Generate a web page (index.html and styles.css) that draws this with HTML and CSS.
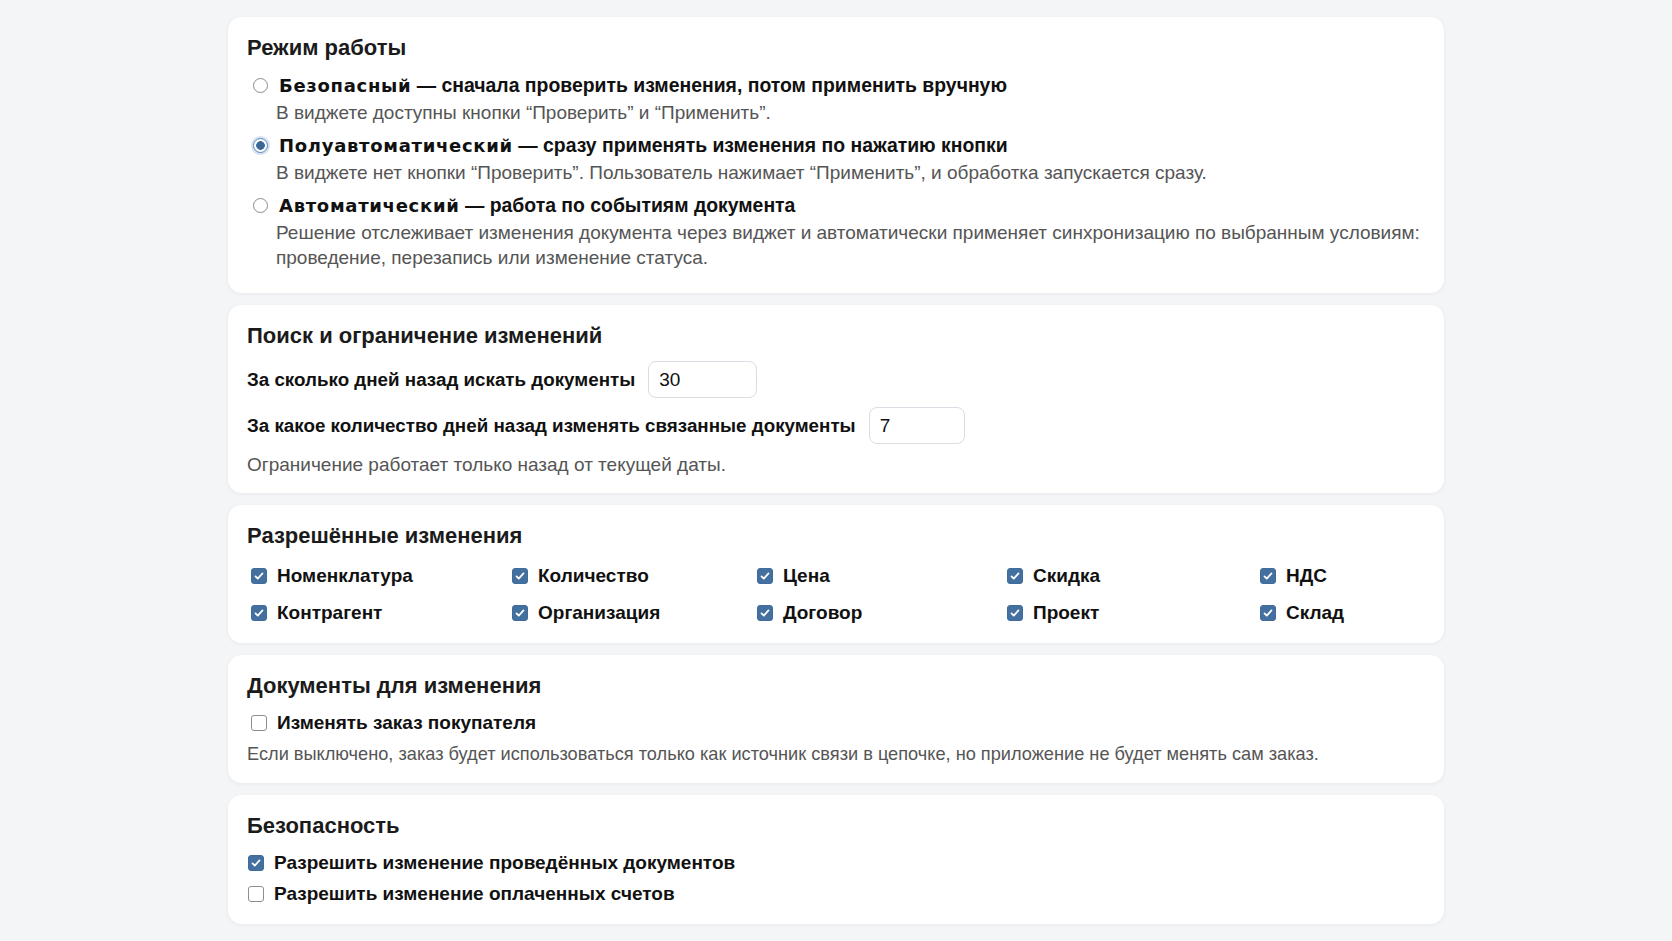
FILE: index.html
```html
<!DOCTYPE html>
<html lang="ru">
  <head>
    <meta charset="UTF-8" />
    <title>Настройки синхронизации</title>
    <link rel="stylesheet" href="styles.css">
  </head>
  <body>
    <div class="page">
      <section class="card card-mode">
        <h2>Режим работы</h2>
        <div class="mode">
          <label class="opt">
            <input type="radio" name="mode" class="radio" />
            <span><b>Безопасный</b> — сначала проверить изменения, потом применить вручную</span>
          </label>
          <p class="desc">В виджете доступны кнопки “Проверить” и “Применить”.</p>
        </div>
        <div class="mode">
          <label class="opt">
            <input type="radio" name="mode" class="radio" checked />
            <span><b>Полуавтоматический</b> — сразу применять изменения по нажатию кнопки</span>
          </label>
          <p class="desc">В виджете нет кнопки “Проверить”. Пользователь нажимает “Применить”, и обработка запускается сразу.</p>
        </div>
        <div class="mode">
          <label class="opt">
            <input type="radio" name="mode" class="radio" />
            <span><b>Автоматический</b> — работа по событиям документа</span>
          </label>
          <p class="desc">Решение отслеживает изменения документа через виджет и автоматически применяет синхронизацию по выбранным условиям: проведение, перезапись или изменение статуса.</p>
        </div>
      </section>

      <section class="card card-search">
        <h2>Поиск и ограничение изменений</h2>
        <div class="field">
          <label for="days-search">За сколько дней назад искать документы</label>
          <input id="days-search" class="num num-wide" type="text" value="30" />
        </div>
        <div class="field">
          <label for="days-linked">За какое количество дней назад изменять связанные документы</label>
          <input id="days-linked" class="num" type="text" value="7" />
        </div>
        <p class="hint">Ограничение работает только назад от текущей даты.</p>
      </section>

      <section class="card">
        <h2>Разрешённые изменения</h2>
        <div class="grid">
          <label class="check"><input type="checkbox" class="box" checked />Номенклатура</label>
          <label class="check"><input type="checkbox" class="box" checked />Количество</label>
          <label class="check"><input type="checkbox" class="box" checked />Цена</label>
          <label class="check"><input type="checkbox" class="box" checked />Скидка</label>
          <label class="check"><input type="checkbox" class="box" checked />НДС</label>
          <label class="check"><input type="checkbox" class="box" checked />Контрагент</label>
          <label class="check"><input type="checkbox" class="box" checked />Организация</label>
          <label class="check"><input type="checkbox" class="box" checked />Договор</label>
          <label class="check"><input type="checkbox" class="box" checked />Проект</label>
          <label class="check"><input type="checkbox" class="box" checked />Склад</label>
        </div>
      </section>

      <section class="card card-docs">
        <h2>Документы для изменения</h2>
        <label class="check"><input type="checkbox" class="box" />Изменять заказ покупателя</label>
        <p class="hint hint-close">Если выключено, заказ будет использоваться только как источник связи в цепочке, но приложение не будет менять сам заказ.</p>
      </section>

      <section class="card">
        <h2>Безопасность</h2>
        <div class="list">
          <label class="check check-tight"><input type="checkbox" class="box" checked />Разрешить изменение проведённых документов</label>
          <label class="check check-tight"><input type="checkbox" class="box" />Разрешить изменение оплаченных счетов</label>
        </div>
      </section>
    </div>
  </body>
</html>
```

FILE: styles.css
```css
body {
  margin: 0;
  padding: 17px 0;
  background: #f4f5f7;
  color: #161616;
  font-family: "Liberation Sans", Arial, sans-serif;
  font-size: 19px;
}
.page {
  width: 1216px;
  margin: 0 auto;
  display: flex;
  flex-direction: column;
  gap: 12px;
}
.card {
  background: #fff;
  border-radius: 14px;
  padding: 17px 19px 18px;
  box-shadow: 0 1px 4px rgba(20, 30, 50, 0.06);
}
.card-mode {
  padding-bottom: 23px;
}
.card-search,
.card-docs {
  padding-bottom: 16px;
}
h2 {
  margin: 0 0 11px;
  font-size: 22px;
  line-height: 28px;
  font-weight: 700;
  color: #1b1b1b;
}
.mode + .mode {
  margin-top: 8px;
}
.opt {
  display: flex;
  align-items: center;
  gap: 11px;
  line-height: 25px;
  font-size: 19.4px;
  font-weight: 700;
  color: #111;
}
.opt b {
  font-family: "DejaVu Sans", sans-serif;
  font-size: 18px;
  font-weight: 700;
  letter-spacing: 0.7px;
}
.desc {
  margin: 2px 0 0 29px;
  line-height: 25px;
  color: #555;
}
.hint {
  margin: 8px 0 0;
  line-height: 25px;
  color: #555;
}
.hint-close {
  margin-top: 7px;
  font-size: 18.2px;
}
.radio {
  appearance: none;
  width: 15px;
  height: 15px;
  margin: 0 0 0 6px;
  border: 1px solid #8a8a8a;
  border-radius: 50%;
  background: #fff;
  flex: none;
}
.radio:checked {
  border: 1px solid #4f82bb;
  background: radial-gradient(circle, #3b6799 0 4px, #fff 4.6px);
  box-shadow: 0 0 0 2px rgba(90, 140, 200, 0.25);
}
.field {
  display: flex;
  align-items: center;
  gap: 13px;
  font-size: 18.8px;
  font-weight: 700;
  color: #111;
}
.field + .field {
  margin-top: 9px;
}
.num {
  width: 96px;
  height: 37px;
  box-sizing: border-box;
  padding: 0 10px;
  border: 1px solid #d9dde4;
  border-radius: 8px;
  font: 19px "Liberation Sans", Arial, sans-serif;
  color: #111;
  background: #fff;
}
.num-wide {
  width: 109px;
}
.grid {
  display: grid;
  grid-template-columns: 261px 245px 250px 253px auto;
  row-gap: 13px;
  margin-top: 14px;
}
.check {
  display: flex;
  align-items: center;
  gap: 10px;
  line-height: 24px;
  font-weight: 700;
  color: #111;
}
.check-tight {
  margin-left: -3px;
}
.list {
  display: flex;
  flex-direction: column;
  gap: 7px;
}
.box {
  appearance: none;
  width: 16px;
  height: 16px;
  margin: 0 0 0 4px;
  border: 1px solid #8d8d8d;
  border-radius: 3px;
  background: #fff;
  flex: none;
}
.box:checked {
  border-color: #3f6c9c;
  background: #44709f url("data:image/svg+xml,%3Csvg xmlns='http://www.w3.org/2000/svg' viewBox='0 0 16 16'%3E%3Cpath d='M4 8.4l2.6 2.6L12 5' fill='none' stroke='%23fff' stroke-width='2' stroke-linecap='round' stroke-linejoin='round'/%3E%3C/svg%3E") center / 14px no-repeat;
}
```
